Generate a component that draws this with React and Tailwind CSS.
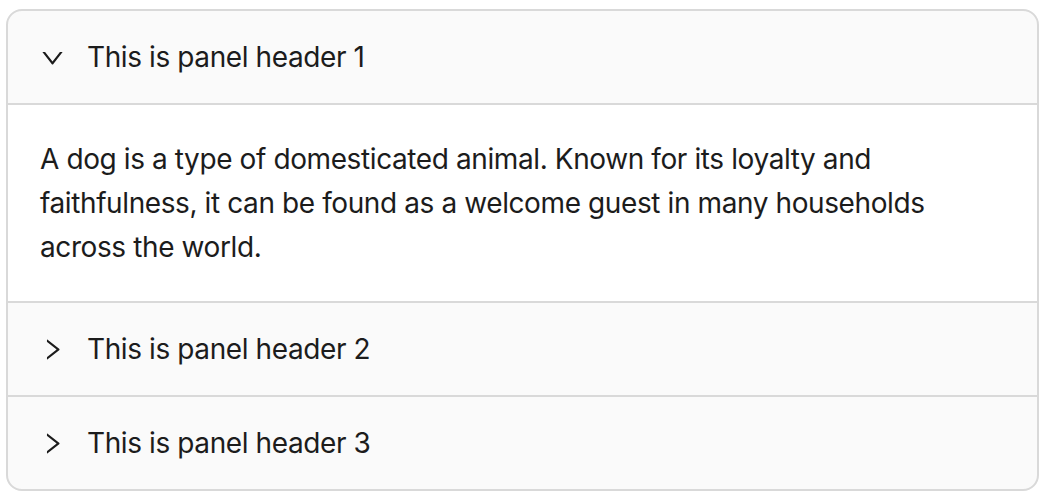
import React, { useState } from "react";

const panels = [
  {
    key: "1",
    header: "This is panel header 1",
    lines: [
      "A dog is a type of domesticated animal. Known for its loyalty and",
      "faithfulness, it can be found as a welcome guest in many households",
      "across the world.",
    ],
  },
  {
    key: "2",
    header: "This is panel header 2",
    lines: [
      "A dog is a type of domesticated animal. Known for its loyalty and",
      "faithfulness, it can be found as a welcome guest in many households",
      "across the world.",
    ],
  },
  {
    key: "3",
    header: "This is panel header 3",
    lines: [
      "A dog is a type of domesticated animal. Known for its loyalty and",
      "faithfulness, it can be found as a welcome guest in many households",
      "across the world.",
    ],
  },
];

// chevron from the antd icon set
const Arrow = ({ open }) => (
  <svg
    viewBox="0 0 1024 1024"
    width="27"
    height="27"
    fill="currentColor"
    className={open ? "rotate-90" : ""}
  >
    <path d="M765.7 486.8L314.9 134.7A7.97 7.97 0 00302 141v77.3c0 4.9 2.3 9.6 6.1 12.6l360 281.1-360 281.1c-3.9 3-6.1 7.7-6.1 12.6V883c0 6.6 7.6 10.3 12.9 6.3l450.8-352.1a31.96 31.96 0 000-50.4z" />
  </svg>
);

const App = () => {
  const [active, setActive] = useState(["1"]);

  const toggle = (key) => {
    setActive((prev) =>
      prev.includes(key) ? prev.filter((k) => k !== key) : [...prev, key]
    );
  };

  return (
    <div
      className="bg-white min-h-screen pl-[6px] pt-[9px]"
      style={{ fontFamily: "Inter, 'Noto Sans', sans-serif" }}
    >
      <div className="w-[1033px] border-2 border-[#d9d9d9] rounded-[16px] overflow-hidden bg-[#fafafa] text-[#1c1c1c] tracking-[-0.4px]">
        {panels.map((p, i) => {
          const open = active.includes(p.key);
          return (
            <div
              key={p.key}
              className={i < panels.length - 1 ? "border-b-2 border-[#d9d9d9]" : ""}
            >
              <div
                onClick={() => toggle(p.key)}
                className="flex items-start px-[32px] py-[24px] cursor-pointer text-[28px] leading-[44px]"
              >
                <span className="h-[44px] w-[27px] flex items-center justify-center mr-[21px] -ml-[1px]">
                  <Arrow open={open} />
                </span>
                <span>{p.header}</span>
              </div>
              {open && (
                <div className="bg-white border-t-2 border-[#d9d9d9] p-[32px] text-[28px] leading-[44px]">
                  {p.lines.map((l) => (
                    <div key={l}>{l}</div>
                  ))}
                </div>
              )}
            </div>
          );
        })}
      </div>
    </div>
  );
};

export default App;
